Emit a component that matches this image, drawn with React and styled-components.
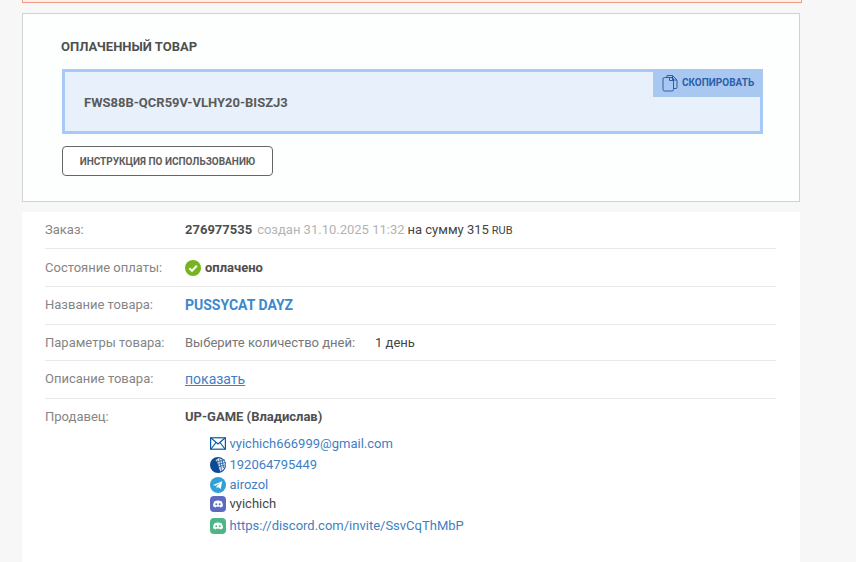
import React from "react";
import styled, { createGlobalStyle } from "styled-components";

const Global = createGlobalStyle`
  html, body { margin: 0; padding: 0; background: #f7f7f7; height: 562px; overflow: hidden; }
  body { font-family: Roboto, "Liberation Sans", sans-serif; color: #555; }
`;
const Page = styled.div`
  width: 780px; margin-left: 22px; height: 562px; overflow: hidden;
`;
const Alert = styled.div`
  height: 2px; background: #fdeee9; border: 1px solid #f19c86; border-top: none; margin-bottom: 10px;
`;
const Card = styled.section`
  width: 778px; height: 189px; box-sizing: border-box; background: #fdffff; border: 1px solid #cfd2d3;
  padding: 26px 36px 0 39px;
`;
const Title = styled.h2`
  margin: 0 0 15px -1px; font-size: 13px; line-height: 14px; font-weight: 700; color: #4f4f4f; text-transform: uppercase;
`;
const KeyBox = styled.div`
  position: relative; height: 65px; box-sizing: border-box; border: 3px solid #a6c9f8; background: #e8f1fb;
  padding: 21px 0 0 19px; font-size: 13px; line-height: 20px; font-weight: 700; color: #5a5a5a;
`;
const CopyButton = styled.div`
  position: absolute; top: -3px; right: -3px; width: 110px; height: 28px; background: #a8c8f1;
  display: flex; align-items: center; gap: 4px; padding-left: 9px; box-sizing: border-box;
  color: #2e5ea8; font-size: 10px; line-height: 12px; font-weight: 700;
`;
const Outline = styled.div`
  width: 211px; height: 30px; box-sizing: border-box; margin-top: 12px; border: 1px solid #666; border-radius: 4px;
  display: flex; align-items: center; justify-content: center;
  font-size: 10px; font-weight: 700; color: #5c5c5c; background: #fff;
`;
const Details = styled.section`
  width: 778px; height: 350px; margin-top: 10px; background: #fff; padding: 0 24px 0 23px; box-sizing: border-box;
`;
const Row = styled.div`
  display: flex; height: ${p => p.$h}px; box-sizing: border-box; border-bottom: ${p => p.$last ? "none" : "1px solid #eaeaea"};
  padding-top: ${p => p.$top}px; font-size: 13px; line-height: 18px;
`;
const Label = styled.div`
  width: 140px; flex: none; color: #858585;
`;
const Value = styled.div`
  display: flex; align-items: center; height: 18px; color: #444; white-space: pre;
`;
const OrderLine = styled.div`
  color: #444; white-space: pre; line-height: 18px;
`;
const OrderNo = styled.b`
  font-size: 13px; color: #4f4f4f; margin-right: 5px;
`;
const Muted = styled.span`
  color: #b3b3b3; margin-right: 3px;
`;
const Rub = styled.small`
  font-size: 11px; margin-left: 3px;
`;
const Paid = styled.b`
  color: #4f4f4f; margin-left: 4px;
`;
const Product = styled.a`
  color: #3d87cf; font-weight: 700; font-size: 14px;
`;
const ParamName = styled.span`
  color: #777; width: 190px;
`;
const ShowLink = styled.a`
  color: #3f80c4; font-size: 14px; text-decoration: underline;
`;
const Seller = styled.b`
  color: #4f4f4f; font-size: 13px;
`;
const Contacts = styled.div`
  margin: 7px 0 0 25px; display: flex; flex-direction: column;
`;
const Contact = styled.div`
  display: flex; align-items: center; gap: 3.5px; height: ${p => p.$h}px; color: ${p => p.$plain ? "#444" : "#3f80c4"};
  font-size: 13px; white-space: nowrap;
`;
const Sellers = styled.div`
  display: flex; flex-direction: column;
`;

const CopyIcon = () => (
  <svg width="16" height="18" viewBox="0 0 16 18" fill="none" stroke="#2e5ea8" strokeWidth="1">
    <path d="M5 3V1.500h5.500L15 6v7.500a1 1 0 0 1-1 1h-2" />
    <rect x="1" y="3.500" width="10.500" height="13.500" rx="1.500" />
    <path d="M7.500 3.500v3h4M10.500 1.500v4.500H15" />
  </svg>
);
const Check = () => (
  <svg width="16" height="16" viewBox="0 0 16 16">
    <circle cx="8" cy="8" r="8" fill="#76b51f" />
    <path d="M4.300 8.200 7 10.800l4.800-5" fill="none" stroke="#fff" strokeWidth="2" />
  </svg>
);
const Mail = () => (
  <svg width="16" height="13" viewBox="0 0 16 13" fill="none" stroke="#0a59a8" strokeWidth="1.200">
    <rect x=".6" y=".8" width="14.800" height="11.400" />
    <path d="m1 1 7 6 7-6M1 12l5-6.500M15 12l-5-6.500" />
  </svg>
);
const Wm = () => (
  <svg width="16" height="16" viewBox="0 0 16 16">
    <circle cx="8" cy="8" r="8" fill="#0b4a94" />
    <path d="M5.500 3 9 1l5 2 1.500 5-2 4.500-3 2-1.500-3-2-6z" fill="#dfe9f3" />
    <path d="M7 2.500l2 10M9.500 1.500l2 12M12 2l1.500 9M6 5l9-2M7 7.500l8.500-2M8 10l7-2" stroke="#0b4a94" strokeWidth=".7" />
  </svg>
);
const Tg = () => (
  <svg width="16" height="16" viewBox="0 0 16 16">
    <circle cx="8" cy="8" r="8" fill="#2fa0d8" />
    <path d="M3 8 12.200 4.300 10.800 12 8 10l-1.300 1.500L6.500 9.200 10.200 6 5.400 8.800z" fill="#fff" />
  </svg>
);
const Discord = ({ bg }) => (
  <svg width="16" height="16" viewBox="0 0 16 16">
    <rect width="16" height="16" rx="4" fill={bg} />
    <path d="M4.500 5.200C6.800 4.200 9.200 4.200 11.500 5.200 12.500 6.800 13 8.500 12.900 10.200 12 10.900 11 11.300 10.200 11.500L9.600 10.500C8.500 10.800 7.500 10.800 6.400 10.500L5.800 11.500C5 11.300 4 10.900 3.100 10.200 3 8.500 3.500 6.800 4.500 5.200z" fill="#fff" />
    <circle cx="6.300" cy="8.300" r="1" fill={bg} />
    <circle cx="9.700" cy="8.300" r="1" fill={bg} />
  </svg>
);

export default function App() {
  return (
    <>
      <Global />
      <Page>
        <Alert />
        <Card>
          <Title>Оплаченный товар</Title>
          <KeyBox>
            FWS88B-QCR59V-VLHY20-BISZJ3
            <CopyButton><CopyIcon />СКОПИРОВАТЬ</CopyButton>
          </KeyBox>
          <Outline>ИНСТРУКЦИЯ ПО ИСПОЛЬЗОВАНИЮ</Outline>
        </Card>
        <Details>
          <Row $h={37} $top={9}>
            <Label>Заказ:</Label>
            <OrderLine><OrderNo>276977535</OrderNo><Muted>создан 31.10.2025 11:32</Muted>на сумму 315<Rub>RUB</Rub></OrderLine>
          </Row>
          <Row $h={38} $top={10}>
            <Label>Состояние оплаты:</Label>
            <Value><Check /><Paid>оплачено</Paid></Value>
          </Row>
          <Row $h={38} $top={9}>
            <Label>Название товара:</Label>
            <Value><Product>PUSSYCAT DAYZ</Product></Value>
          </Row>
          <Row $h={36} $top={9}>
            <Label>Параметры товара:</Label>
            <Value><ParamName>Выберите количество дней:</ParamName>1 день</Value>
          </Row>
          <Row $h={38} $top={9}>
            <Label>Описание товара:</Label>
            <Value><ShowLink>показать</ShowLink></Value>
          </Row>
          <Row $h={150} $top={9} $last>
            <Label>Продавец:</Label>
            <Sellers>
              <Value><Seller>UP-GAME (Владислав)</Seller></Value>
              <Contacts>
                <Contact $h={21}><Mail />vyichich666999@gmail.com</Contact>
                <Contact $h={21}><Wm />192064795449</Contact>
                <Contact $h={19}><Tg />airozol</Contact>
                <Contact $h={20} $plain><Discord bg="#5c6bc0" />vyichich</Contact>
                <Contact $h={24}><Discord bg="#4db586" />https://discord.com/invite/SsvCqThMbP</Contact>
              </Contacts>
            </Sellers>
          </Row>
        </Details>
      </Page>
    </>
  );
}
